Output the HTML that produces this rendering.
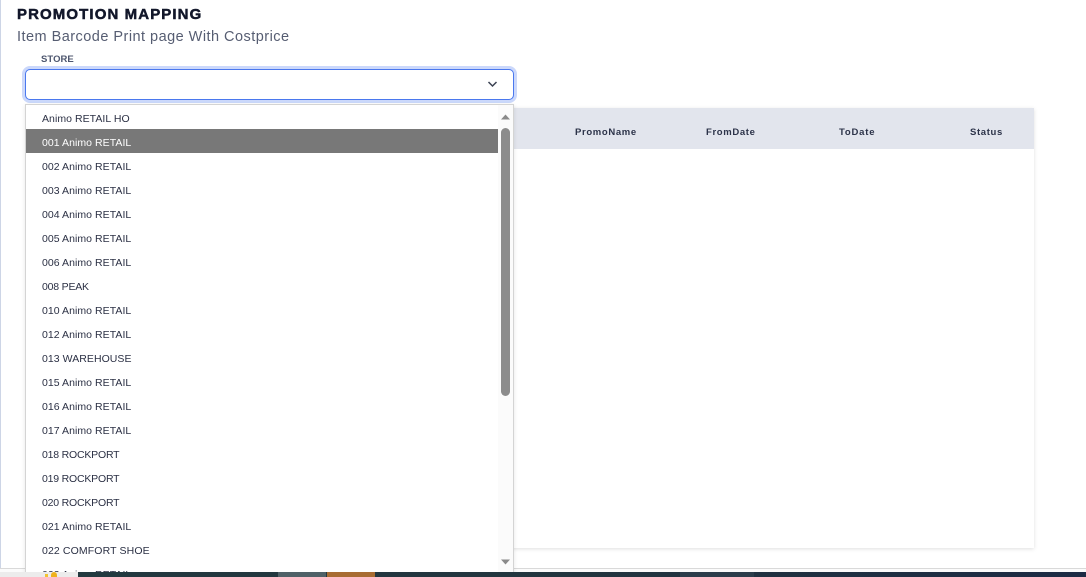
<!DOCTYPE html>
<html>
<head>
<meta charset="utf-8">
<style>
html,body{margin:0;padding:0;background:#fff;}
body{width:1086px;height:577px;overflow:hidden;position:relative;font-family:"Liberation Sans",sans-serif;color:#2b3044;}
.a{position:absolute;white-space:nowrap;}
.opt{position:absolute;height:24px;line-height:28px;padding-left:16px;box-sizing:border-box;width:472px;font-size:10.5px;letter-spacing:.05px;color:#2b3044;white-space:nowrap;overflow:hidden;}
.th{position:absolute;top:127px;font-size:9.5px;font-weight:bold;color:#2c3349;line-height:12px;white-space:nowrap;letter-spacing:.65px;}
</style>
</head>
<body>
<div class="a" style="left:0;top:0;width:1px;height:568px;background:#cdd5e6;"></div>
<div class="a" style="left:0;top:568px;width:1086px;height:1px;background:#d9d9d9;"></div>
<div class="a" style="left:0;top:569px;width:1086px;height:3px;background:#fbfbfb;"></div>

<div class="a" style="left:17px;top:6px;font-size:15px;font-weight:bold;line-height:18px;color:#12172a;letter-spacing:1.1px;-webkit-text-stroke:.5px #12172a;">PROMOTION MAPPING</div>
<div class="a" style="left:17px;top:28px;font-size:14.5px;line-height:19px;color:#565d72;letter-spacing:.47px;">Item Barcode Print page With Costprice</div>
<div class="a" style="left:41px;top:54px;font-size:9.5px;font-weight:bold;line-height:12px;color:#4d566e;letter-spacing:.05px;">STORE</div>

<div class="a" style="left:25px;top:69px;width:489px;height:31px;box-sizing:border-box;border:1px solid #4a78ee;border-radius:5px;background:#fff;box-shadow:0 0 0 3px #cbd8fb;"></div>
<svg class="a" style="left:486px;top:80px;" width="13" height="9" viewBox="0 0 13 9"><path d="M2.5 2 L6.5 6 L10.5 2" fill="none" stroke="#3a4152" stroke-width="1.5"/></svg>

<!-- table card -->
<div class="a" style="left:500px;top:108px;width:534px;height:440px;background:#fff;box-shadow:0 1px 4px rgba(0,0,0,.13);"></div>
<div class="a" style="left:500px;top:108px;width:534px;height:41px;background:#e2e5ed;"></div>
<div class="th" style="left:575px;">PromoName</div>
<div class="th" style="left:706px;">FromDate</div>
<div class="th" style="left:839px;letter-spacing:.8px;">ToDate</div>
<div class="th" style="left:970px;">Status</div>

<!-- dropdown -->
<div class="a" style="left:25px;top:104px;width:489px;height:473px;box-sizing:border-box;border:1px solid #d4d4d4;border-bottom:0;background:#fff;box-shadow:0 1px 4px rgba(0,0,0,.1);overflow:hidden;">
  <div class="a" style="left:472px;top:0;width:15px;height:472px;background:#fbfbfb;"></div>
  <div class="opt" style="left:0;top:0;">Animo RETAIL HO</div>
  <div class="opt" style="left:0;top:24px;background:#787878;color:#fff;">001 Animo RETAIL</div>
  <div class="opt" style="left:0;top:48px;">002 Animo RETAIL</div>
  <div class="opt" style="left:0;top:72px;">003 Animo RETAIL</div>
  <div class="opt" style="left:0;top:96px;">004 Animo RETAIL</div>
  <div class="opt" style="left:0;top:120px;">005 Animo RETAIL</div>
  <div class="opt" style="left:0;top:144px;">006 Animo RETAIL</div>
  <div class="opt" style="left:0;top:168px;letter-spacing:-.2px;">008 PEAK</div>
  <div class="opt" style="left:0;top:192px;">010 Animo RETAIL</div>
  <div class="opt" style="left:0;top:216px;">012 Animo RETAIL</div>
  <div class="opt" style="left:0;top:240px;">013 WAREHOUSE</div>
  <div class="opt" style="left:0;top:264px;">015 Animo RETAIL</div>
  <div class="opt" style="left:0;top:288px;">016 Animo RETAIL</div>
  <div class="opt" style="left:0;top:312px;">017 Animo RETAIL</div>
  <div class="opt" style="left:0;top:336px;letter-spacing:-.2px;">018 ROCKPORT</div>
  <div class="opt" style="left:0;top:360px;letter-spacing:-.2px;">019 ROCKPORT</div>
  <div class="opt" style="left:0;top:384px;letter-spacing:-.2px;">020 ROCKPORT</div>
  <div class="opt" style="left:0;top:408px;">021 Animo RETAIL</div>
  <div class="opt" style="left:0;top:432px;letter-spacing:.12px;">022 COMFORT SHOE</div>
  <div class="opt" style="left:0;top:456px;">023 Animo RETAIL</div>
  <div class="a" style="left:475px;top:23px;width:9px;height:268px;background:#8c8c8c;border-radius:4.5px;"></div>
  <svg class="a" style="left:474px;top:9px;" width="11" height="7" viewBox="0 0 11 7"><path d="M5.5 0.5 L10 5.5 H1 Z" fill="#8a8a8a"/></svg>
  <svg class="a" style="left:474px;top:454px;" width="11" height="7" viewBox="0 0 11 7"><path d="M1 0.5 H10 L5.5 5.5 Z" fill="#8a8a8a"/></svg>
</div>

<!-- taskbar -->
<div class="a" style="left:0;top:572px;width:78px;height:5px;background:#ececec;"></div>
<div class="a" style="left:45px;top:574px;width:3px;height:3px;background:#f2c230;"></div>
<div class="a" style="left:51px;top:572px;width:6px;height:5px;background:#efb21e;border-radius:3px 3px 0 0;"></div>
<div class="a" style="left:78px;top:572px;width:1008px;height:5px;background:linear-gradient(90deg,#22393f 0%,#22353f 50%,#1c2b44 100%);"></div>
<div class="a" style="left:278px;top:572px;width:48px;height:5px;background:#4f6167;"></div>
<div class="a" style="left:327px;top:572px;width:48px;height:5px;background:#a86c32;"></div>
<div class="a" style="left:680px;top:572px;width:74px;height:5px;background:#2b3d4b;"></div>
</body>
</html>
